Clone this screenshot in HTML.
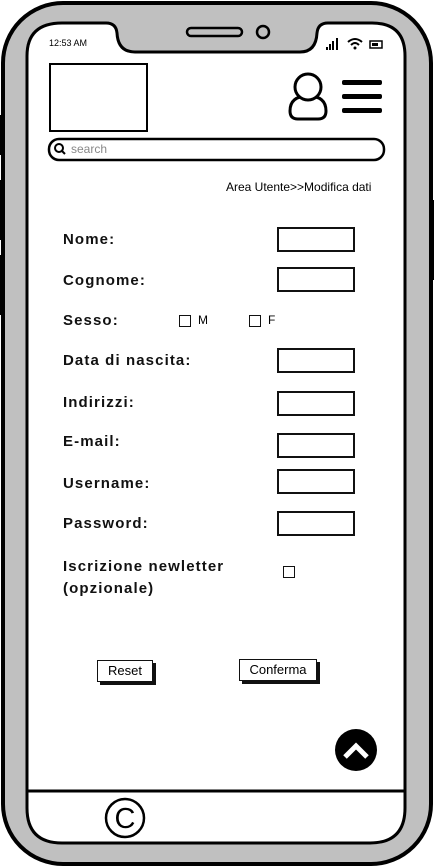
<!DOCTYPE html>
<html><head><meta charset="utf-8"><style>
body{margin:0;width:434px;height:867px;overflow:hidden;background:#fff;font-family:"Liberation Sans",sans-serif;}
.a{position:absolute}
.lbl{position:absolute;left:63px;font-size:15px;font-weight:bold;color:#111;letter-spacing:1.1px}
.in{position:absolute;left:277px;width:74px;height:21px;border:2px solid #111;background:#fff}
.cb{position:absolute;width:10px;height:10px;border:1px solid #111}
.btn{position:absolute;border:1.5px solid #111;box-shadow:3px 3px 0 #111;background:#fff;font-size:13px;text-align:center;line-height:20px;height:20px}
</style></head><body>
<svg class="a" style="left:0;top:0" width="434" height="867">
<rect x="3" y="3" width="428" height="861" rx="60" fill="#c0c0c0" stroke="#000" stroke-width="4"/>
<rect x="0" y="115" width="5" height="40" fill="#000"/>
<rect x="0" y="180" width="5" height="60" fill="#000"/>
<rect x="0" y="255" width="5" height="60" fill="#000"/>
<rect x="429" y="200" width="5" height="80" fill="#000"/>
<path d="M62 23 H106 Q116 23 117 33 Q118 52 135 52 H300 Q316 52 317 33 Q318 23 328 23 H372 Q405 23 405 56 V808 Q405 843 370 843 H62 Q27 843 27 808 V56 Q27 23 62 23 Z" fill="#fff" stroke="#000" stroke-width="3"/>
<rect x="187" y="28" width="55" height="8" rx="4" fill="none" stroke="#000" stroke-width="2.5"/>
<circle cx="263" cy="32" r="6" fill="none" stroke="#000" stroke-width="2.5"/>
<line x1="28" y1="791" x2="404" y2="791" stroke="#000" stroke-width="3"/>
<rect x="50" y="64" width="97" height="67" fill="#fff" stroke="#000" stroke-width="2"/>
<path d="M290 111 Q290 96 308 96 Q326 96 326 111 Q326 119 318 119 H298 Q290 119 290 111 Z" fill="#fff" stroke="#000" stroke-width="3" stroke-linejoin="round"/>
<circle cx="308" cy="87" r="13" fill="#fff" stroke="#000" stroke-width="3"/>
<rect x="342" y="80" width="40" height="5" rx="2" fill="#000"/>
<rect x="342" y="94" width="40" height="5" rx="2" fill="#000"/>
<rect x="342" y="108" width="40" height="5" rx="2" fill="#000"/>
<rect x="49" y="139" width="335" height="21" rx="10" fill="#fff" stroke="#000" stroke-width="2.5"/>
<circle cx="59" cy="148" r="4" fill="none" stroke="#000" stroke-width="2"/>
<line x1="62" y1="151" x2="65" y2="154" stroke="#000" stroke-width="2"/>
<rect x="326" y="47" width="2" height="3" fill="#000"/><rect x="329" y="44" width="2" height="6" fill="#000"/><rect x="332" y="41" width="2" height="9" fill="#000"/><rect x="336" y="38" width="2" height="12" fill="#000"/>
<path d="M348 42 Q355 36 362 42 M351 45 Q355 41 359 45" fill="none" stroke="#000" stroke-width="2"/><circle cx="355" cy="48" r="1.5"/>
<rect x="370" y="41" width="12" height="7" fill="none" stroke="#000" stroke-width="1.5"/><rect x="372" y="43" width="6" height="3"/>
<circle cx="356" cy="750" r="21" fill="#000"/>
<path d="M345 757 L356 746 L367 757" fill="none" stroke="#fff" stroke-width="5"/>
<circle cx="125" cy="818" r="19" fill="none" stroke="#000" stroke-width="2.5"/>
</svg>
<div class="a" style="left:49px;top:38px;font-size:9px">12:53 AM</div>
<div class="a" style="left:71px;top:142px;font-size:12px;color:#888">search</div>
<div class="a" style="left:226px;top:180px;font-size:12px">Area Utente&gt;&gt;Modifica dati</div>
<div class="a" style="left:110px;top:803px;font-size:29px;width:30px;text-align:center">C</div>
<div class="lbl" style="top:231px">Nome:</div>
<div class="lbl" style="top:272px">Cognome:</div>
<div class="lbl" style="top:312px">Sesso:</div>
<div class="lbl" style="top:352px">Data di nascita:</div>
<div class="lbl" style="top:394px">Indirizzi:</div>
<div class="lbl" style="top:433px">E-mail:</div>
<div class="lbl" style="top:475px">Username:</div>
<div class="lbl" style="top:515px">Password:</div>
<div class="lbl" style="top:556px;line-height:22px">Iscrizione newletter<br>(opzionale)</div>
<div class="in" style="top:227px"></div>
<div class="in" style="top:267px"></div>
<div class="in" style="top:348px"></div>
<div class="in" style="top:391px"></div>
<div class="in" style="top:433px"></div>
<div class="in" style="top:469px"></div>
<div class="in" style="top:511px"></div>
<div class="cb" style="left:179px;top:315px"></div><div class="a" style="left:198px;top:313px;font-size:12px">M</div>
<div class="cb" style="left:249px;top:315px"></div><div class="a" style="left:268px;top:313px;font-size:12px">F</div>
<div class="cb" style="left:283px;top:566px"></div>
<div class="btn" style="left:97px;top:660px;width:54px">Reset</div>
<div class="btn" style="left:239px;top:659px;width:76px">Conferma</div>
</body></html>
